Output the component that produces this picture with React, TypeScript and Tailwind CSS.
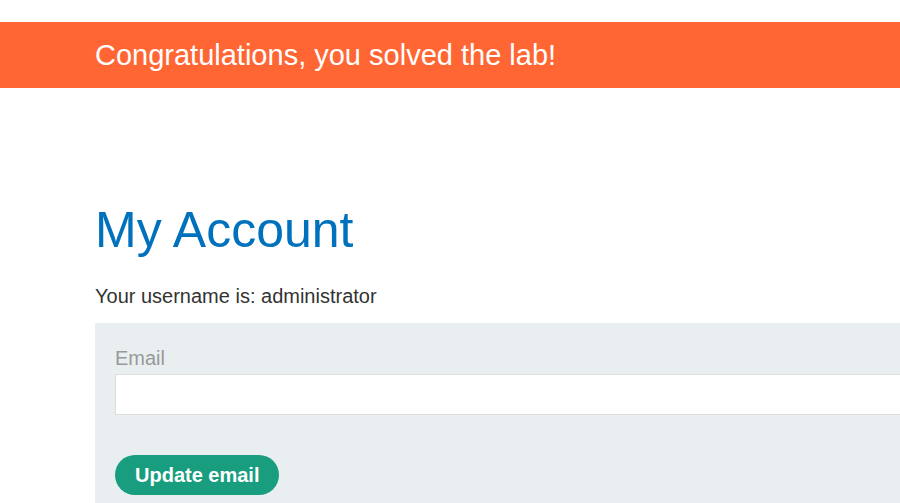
export default function App() {
  return (
    <div className="min-h-[503px] w-[900px] overflow-hidden bg-white font-['Liberation_Sans',Arial,sans-serif]">
      <div className="h-[22px]" />
      <div className="flex h-[66px] items-center bg-[#ff6633] pl-[95px]">
        <h4 className="text-[29px] leading-none text-white">Congratulations, you solved the lab!</h4>
      </div>
      <div className="w-[1200px] pl-[95px] pt-[117px]">
        <h1 className="text-[50px] leading-none text-[#0071bc]">My Account</h1>
        <p className="mt-[29px] text-[20px] leading-[24px] text-[#333332]">Your username is: administrator</p>
        <div className="mt-[15px] bg-[#e9eef1] px-5 pt-[23px] pb-[20px]">
          <label className="block text-[20px] leading-[24px] text-[#999999]">Email</label>
          <input className="mt-[4px] block h-[41px] w-full border border-[#dddddd] bg-white outline-none" />
          <button className="mt-[40px] h-[40px] rounded-full bg-[#189d7e] px-5 text-[20px] font-bold text-white">
            Update email
          </button>
        </div>
      </div>
    </div>
  );
}
